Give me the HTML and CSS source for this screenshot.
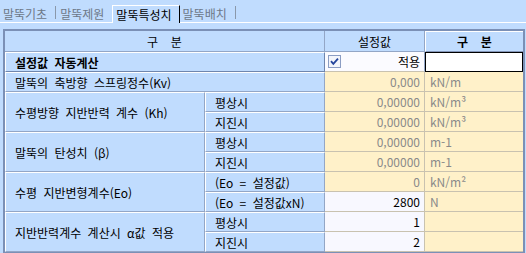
FILE: index.html
```html
<!DOCTYPE html>
<html lang="ko">
<head>
  <meta charset="UTF-8">
  <title>말뚝특성치</title>
  <link rel="stylesheet" href="styles.css">
</head>
<body>
  <!-- Tab strip -->
  <div class="tabs">
    <span class="tab">말뚝기초</span>
    <span class="bar bar-first"></span>
    <span class="tab tab-second">말뚝제원</span>
    <span class="tab active">말뚝특성치</span>
    <span class="tab tab-last">말뚝배치</span>
    <span class="bar"></span>
  </div>

  <!-- Property grid -->
  <div class="panel">
    <table class="grid">
      <colgroup>
        <col class="c-label">
        <col class="c-sub">
        <col class="c-val">
        <col class="c-unit">
      </colgroup>
      <tr class="head">
        <th colspan="2">구&nbsp;&nbsp;분</th>
        <th>설정값</th>
        <th class="btn">구&nbsp;&nbsp;분</th>
      </tr>
      <tr>
        <td colspan="2" class="raised">설정값 자동계산</td>
        <td class="chk">
          <div class="chk-wrap">
            <svg width="13" height="13" viewBox="0 0 13 13">
              <rect x="0.5" y="0.5" width="12" height="12" fill="#f3f5fb" stroke="#8b9dc3"/>
              <path d="M3 6.2 L5.3 8.8 L10 3.6" fill="none" stroke="#24459c" stroke-width="1.8"/>
            </svg>
            <span>적용</span>
          </div>
        </td>
        <td class="input"></td>
      </tr>
      <tr>
        <td colspan="2">말뚝의 축방향 스프링정수(Kv)</td>
        <td class="val">0,000</td>
        <td class="unit">kN/m</td>
      </tr>
      <tr>
        <td rowspan="2">수평방향 지반반력 계수 (Kh)</td>
        <td>평상시</td>
        <td class="val">0,00000</td>
        <td class="unit">kN/m³</td>
      </tr>
      <tr>
        <td>지진시</td>
        <td class="val">0,00000</td>
        <td class="unit">kN/m³</td>
      </tr>
      <tr>
        <td rowspan="2">말뚝의 탄성치 (β)</td>
        <td>평상시</td>
        <td class="val">0,00000</td>
        <td class="unit">m-1</td>
      </tr>
      <tr>
        <td>지진시</td>
        <td class="val">0,00000</td>
        <td class="unit">m-1</td>
      </tr>
      <tr>
        <td rowspan="2">수평 지반변형계수(Eo)</td>
        <td>(Eo = 설정값)</td>
        <td class="val">0</td>
        <td class="unit">kN/m²</td>
      </tr>
      <tr>
        <td>(Eo = 설정값xN)</td>
        <td class="val on">2800</td>
        <td class="unit">N</td>
      </tr>
      <tr>
        <td rowspan="2">지반반력계수 계산시 α값 적용</td>
        <td>평상시</td>
        <td class="val on">1</td>
        <td class="unit"></td>
      </tr>
      <tr>
        <td>지진시</td>
        <td class="val on">2</td>
        <td class="unit"></td>
      </tr>
    </table>
  </div>
</body>
</html>
```

FILE: styles.css
```css
body {
  margin: 0;
  background: #c0dcfe;
  font-family: "Noto Sans CJK KR", "Noto Sans", sans-serif;
  font-size: 12px;
  word-spacing: 3px;
  color: #000;
}

/* tabs */
.tabs {
  display: flex;
  align-items: flex-end;
  height: 22px;
  padding-left: 3px;
  border-bottom: 1px solid #fff;
}
.tab {
  line-height: 17px;
  color: #6d7888;
}
.tab-second {
  margin-left: 4px;
}
.tab.active {
  box-sizing: border-box;
  height: 18px;
  margin-left: 8px;
  margin-bottom: -1px;
  padding: 0 7px 0 3px;
  color: #000;
  background: #c0dcfe;
  border-left: 1px solid #fff;
  border-top: 1px solid #fff;
  border-right: 1px solid #000;
}
.tab-last {
  margin-left: 3px;
}
.bar {
  width: 1px;
  height: 13px;
  margin: 0 0 3px 8px;
  background: #8a98aa;
}

/* grid */
.panel {
  padding: 6px 0 0 3px;
}
.grid {
  box-sizing: border-box;
  width: 522px;
  table-layout: fixed;
  border-collapse: separate;
  border-spacing: 0;
  border: 2px solid #7b90b6;
}
.c-label { width: 200px; }
.c-sub { width: 120px; }
.c-val { width: 100px; }
.c-unit { width: 98px; }

.grid td,
.grid th {
  box-sizing: border-box;
  height: 20px;
  padding: 0 0 0 9px;
  line-height: 17px;
  font-weight: normal;
  text-align: left;
  white-space: nowrap;
  overflow: hidden;
  border-top: 1px solid #fff;
  border-left: 1px solid #fff;
  border-bottom: 1px solid #93a6c6;
  border-right: 1px solid #93a6c6;
}
.grid .head th {
  height: 21px;
  padding: 0;
  text-align: center;
  border-top: 0;
  border-left: 0;
}
.grid .head th.btn {
  font-weight: bold;
  border-top: 1px solid #fff;
  border-left: 1px solid #fff;
  border-bottom: 1px solid #8496b8;
  border-right: 0;
}
.grid td.raised {
  font-weight: bold;
  border-bottom-color: #6f86ae;
  border-right-color: #6f86ae;
}
.grid td.chk {
  padding: 0 4px 0 3px;
  background: #fbfbff;
  border-top: 0;
  border-left: 0;
  border-bottom: 1px solid #c9c2b0;
}
.chk-wrap {
  display: flex;
  align-items: center;
  justify-content: space-between;
}
.chk-wrap svg {
  display: block;
}
.grid td.input {
  background: #fff;
  border: 1px solid #000;
}
.grid td.val {
  padding: 0 4px 0 0;
  text-align: right;
  color: #8a8a8a;
  background: #fff1c9;
  border-top: 0;
  border-left: 0;
  border-bottom: 1px solid #c9c2b0;
  border-right: 1px solid #c9c2b0;
}
.grid td.val.on {
  color: #000;
  background: #f8f8ff;
}
.grid td.unit {
  padding-left: 5px;
  color: #8a8a8a;
  background: #fff1c9;
  border-top: 0;
  border-left: 0;
  border-right: 0;
  border-bottom: 1px solid #c9c2b0;
}
```
